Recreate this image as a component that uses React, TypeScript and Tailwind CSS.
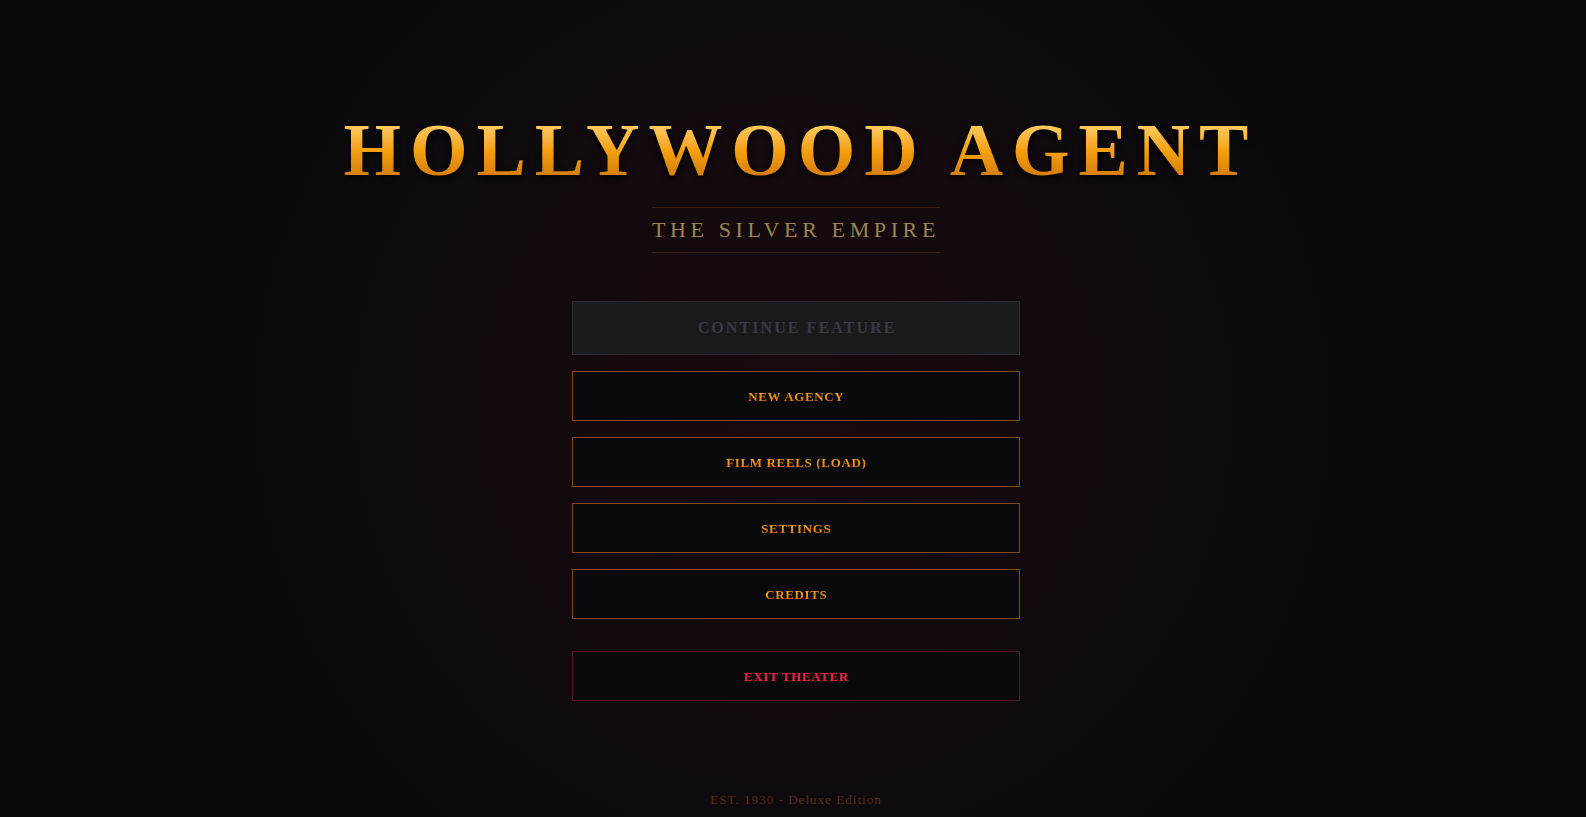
import React from "react";

const serif = { fontFamily: '"Liberation Serif", "DejaVu Serif", serif' };

function GoldButton({ label }: { label: string }) {
  return (
    <button
      className="flex h-[50px] w-full items-center justify-center border border-[#7f4a12] bg-[#0a0a0c]"
      style={serif}
    >
      <span className="bg-linear-to-b from-[#f9b122] to-[#e9730b] bg-clip-text pl-[0.05em] text-[13px] font-bold uppercase leading-none tracking-[0.05em] text-transparent">
        {label}
      </span>
    </button>
  );
}

export default function App() {
  return (
    <div
      className="flex h-[817px] w-full flex-col items-center overflow-hidden bg-[#0a0a0c] bg-[radial-gradient(circle_at_50%_50%,#180a10_0%,#130a0e_240px,#0a0a0c_560px)] pl-[6px]"
      style={serif}
    >
      <h1 className="mt-[113px] h-[74px] bg-linear-to-b from-[#ffdf78] via-[#f5a10e] to-[#c86e0b] bg-clip-text pl-[0.12em] text-[74px] font-bold leading-none tracking-[0.12em] text-transparent drop-shadow-[0_2px_3px_rgba(0,0,0,0.8)]">
        HOLLYWOOD AGENT
      </h1>

      <div className="mt-[20px] border-y border-[#3d1d10] py-[7px]">
        <p className="text-[22px] leading-[30px] tracking-[0.21em] text-[#9c8550]">
          THE SILVER EMPIRE
        </p>
      </div>

      <div className="mt-12 flex w-[448px] flex-col">
        <button className="flex h-[54px] w-full items-center justify-center border border-[#2c2c32] bg-[#1a1a1d]">
          <span className="pl-[0.13em] text-[16px] font-semibold leading-none tracking-[0.13em] text-[#393943]">
            CONTINUE FEATURE
          </span>
        </button>

        <div className="mt-4 flex flex-col gap-4">
          <GoldButton label="New Agency" />
          <GoldButton label="Film Reels (Load)" />
          <GoldButton label="Settings" />
          <GoldButton label="Credits" />
        </div>

        <button className="mt-8 flex h-[50px] w-full items-center justify-center border border-[#561226] bg-[#0a0a0c]">
          <span className="pl-[0.05em] text-[13px] font-bold uppercase leading-none tracking-[0.05em] text-[#e0284a]">
            Exit Theater
          </span>
        </button>
      </div>

      <footer className="mt-auto pb-[7px]">
        <p className="text-[13px] leading-[20px] tracking-[0.08em] text-[#5a2b12]">
          EST. 1930 - Deluxe Edition
        </p>
      </footer>
    </div>
  );
}
